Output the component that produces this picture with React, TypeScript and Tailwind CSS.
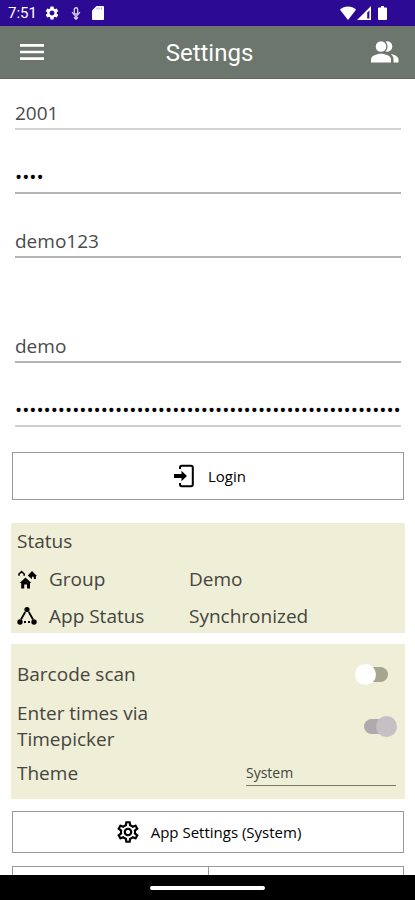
import { useState } from "react";
import { MdMenu, MdOutlineSettings, MdSettings } from "react-icons/md";

type Field = {
  id: string;
  label: string;
  type: "text" | "password";
  value: string;
  underline: string;
};

const TERMINAL_FIELDS: Field[] = [
  { id: "terminal", label: "Terminal", type: "text", value: "2001", underline: "border-b-2 border-[#d3d3d3]" },
  { id: "pin", label: "PIN", type: "password", value: "0000", underline: "border-b-2 border-[#b4b4b4]" },
  { id: "customer", label: "Customer", type: "text", value: "demo123", underline: "border-b-2 border-[#b4b4b4]" },
];

const ACCOUNT_FIELDS: Field[] = [
  { id: "user", label: "User", type: "text", value: "demo", underline: "border-b-2 border-[#b4b4b4]" },
  { id: "password", label: "Password", type: "password", value: "0".repeat(54), underline: "border-b-2 border-[#cfcfcf]" },
];

function MicIcon() {
  return (
    <svg viewBox="0 0 10 14" className="h-[13px] w-[10px]" fill="none" stroke="#d9d2f5" strokeWidth="1.4">
      <rect x="3.2" y="0.8" width="3.6" height="7" rx="1.8" />
      <path d="M.8 5.600 5 10.600 9.200 5.600M5 10.200v3.200M2.800 11 5 13.200 7.200 11" />
    </svg>
  );
}

function SdCardIcon() {
  return (
    <svg viewBox="0 0 12 14" className="h-[14px] w-3" fill="white">
      <path d="M4.500 0H11a1 1 0 0 1 1 1v12a1 1 0 0 1-1 1H1a1 1 0 0 1-1-1V4.500Z" />
      <path d="M5 1.500v2M7.200 1.500v2M9.400 1.500v2" stroke="#8f7fc8" strokeWidth="0.8" />
    </svg>
  );
}

function WifiIcon() {
  return (
    <svg viewBox="0 0 16 14" className="h-[14px] w-[16px]" fill="white">
      <path d="M8 14 0 3.8C2.2 1.4 5 .4 8 .4s5.800 1 8 3.400Z" />
    </svg>
  );
}

function SignalIcon() {
  return (
    <svg viewBox="0 0 14 14" className="h-[14px] w-[14px]" fill="white">
      <path fillRule="evenodd" d="M14 0v14H0ZM12.400 4.500 10.200 6.500v6h2.200Z" />
    </svg>
  );
}

function BatteryIcon() {
  return (
    <svg viewBox="0 0 9 14" className="h-[14px] w-[9px]" fill="white">
      <path d="M3 0h3v1.500h2a1 1 0 0 1 1 1V13a1 1 0 0 1-1 1H1a1 1 0 0 1-1-1V2.500a1 1 0 0 1 1-1h2Z" />
    </svg>
  );
}

function UsersIcon() {
  return (
    <svg viewBox="0 0 28 22" className="h-[22px] w-7" fill="white">
      <circle cx="10" cy="5.500" r="5.300" />
      <path d="M0 21.500V18.500C0 15 5.500 12.800 10 12.800s10 2.200 10 5.700v3Z" />
      <path d="M14.600 10.600a5.300 5.300 0 1 0 0-10.200 7.600 7.600 0 0 1 0 10.200Z" />
      <path d="M19.800 13.100c4.200.7 7.700 2.600 7.700 5.400v3h-5V18.500c0-2.200-1-4-2.700-5.400Z" />
    </svg>
  );
}

function LoginIcon() {
  return (
    <svg viewBox="0 0 20 24" className="h-6 w-5" fill="none" stroke="black" strokeWidth="2">
      <path d="M6 5V3.500A1.800 1.800 0 0 1 7.800 1.700H17A1.800 1.800 0 0 1 18.800 3.500v17A1.800 1.800 0 0 1 17 22.300H7.800A1.800 1.800 0 0 1 6 20.500V19" />
      <path d="M0 10h7.500V6.800L13 12l-5.500 5.200V14H0Z" fill="black" stroke="none" />
    </svg>
  );
}

function GroupIcon() {
  return (
    <svg viewBox="0 0 20 20" className="size-5 shrink-0" fill="black">
      <path d="M8.500 8.500 14.300 14H13V19.500H10V15.500H7.200V19.500H4.200V14H2.700Z" />
      <path d="M15 2 20 7H18.900V10H16.800V7.800H15V10.300L10.800 6.400Z" />
      <path d="M2 6.800V5L4.600 2.600 7.200 5V6.800" fill="none" stroke="black" strokeWidth="1.600" />
    </svg>
  );
}

function SyncStatusIcon() {
  return (
    <svg viewBox="0 0 20 20" className="size-5 shrink-0" fill="black">
      <circle cx="10" cy="3.500" r="2.600" />
      <circle cx="3" cy="16" r="2.700" />
      <circle cx="17" cy="16" r="2.700" />
      <path d="M8.200 6 4 13.500M11.800 6 16 13.500" fill="none" stroke="black" strokeWidth="1.800" />
      <path d="M7 16h6" fill="none" stroke="black" strokeWidth="1.800" strokeDasharray="2 2" />
    </svg>
  );
}

function TextField({ field }: { field: Field }) {
  return (
    <input
      id={field.id}
      aria-label={field.label}
      type={field.type}
      defaultValue={field.value}
      className={`h-8 w-full rounded-none bg-transparent p-0 text-[19px] outline-none ${
        field.type === "password" ? "text-black" : "text-[#4a4a4a]"
      } ${field.underline}`}
    />
  );
}

export default function App() {
  const [barcodeScan, setBarcodeScan] = useState(false);
  const [theme, setTheme] = useState("System");

  return (
    <div className="flex h-screen flex-col overflow-hidden bg-white font-['Open_Sans',sans-serif] text-[#45453f]">
      <div className="flex h-[26px] shrink-0 items-center justify-between bg-[#2c0a94] pr-7 pl-2 font-['Roboto',sans-serif] text-white">
        <div className="flex items-center">
          <span className="w-9 text-[15px]">7:51</span>
          <MdSettings className="size-4" />
          <span className="mx-[11px]">
            <MicIcon />
          </span>
          <SdCardIcon />
        </div>
        <div className="flex items-center gap-px">
          <WifiIcon />
          <SignalIcon />
          <span className="ml-[6px]">
            <BatteryIcon />
          </span>
        </div>
      </div>

      <header className="flex h-[53px] shrink-0 items-center justify-between border-b border-[#5f675f] bg-[#6c766c] px-4 text-white">
        <button type="button" aria-label="Menu">
          <MdMenu className="size-8" />
        </button>
        <h1 className="pt-[2px] font-['Roboto',sans-serif] text-2xl">Settings</h1>
        <button type="button" aria-label="Users">
          <UsersIcon />
        </button>
      </header>

      <main className="min-h-0 flex-1 overflow-hidden pt-[19px] pr-[10px] pl-[11px]">
        <form onSubmit={(event) => event.preventDefault()}>
          <div className="flex flex-col gap-8 px-1">
            {TERMINAL_FIELDS.map((field) => (
              <TextField key={field.id} field={field} />
            ))}
          </div>
          <div className="mt-[73px] flex flex-col gap-8 px-1">
            {ACCOUNT_FIELDS.map((field) => (
              <TextField key={field.id} field={field} />
            ))}
          </div>
          <div className="mt-[25px] px-px">
            <button
              type="submit"
              className="flex h-12 w-full items-center justify-center gap-[14px] border border-[#999] pl-1 text-[15px] text-black"
            >
              <LoginIcon />
              Login
            </button>
          </div>
        </form>

        <section className="mt-[23px] bg-[#efeed7] px-[6px] pt-[5px] pb-1 text-[19px] leading-[26px]">
          <h2>Status</h2>
          <dl className="mt-3 grid grid-cols-[172px_1fr] gap-y-[11px]">
            <dt className="flex items-center gap-3">
              <GroupIcon />
              Group
            </dt>
            <dd>Demo</dd>
            <dt className="flex items-center gap-3">
              <SyncStatusIcon />
              App Status
            </dt>
            <dd>Synchronized</dd>
          </dl>
        </section>

        <section className="mt-[11px] bg-[#efeed7] px-[6px] pt-[17px] pb-[13px] text-[19px] leading-[26px]">
          <div className="flex items-center justify-between">
            <label htmlFor="barcode-scan">Barcode scan</label>
            <input
              id="barcode-scan"
              type="checkbox"
              role="switch"
              checked={barcodeScan}
              onChange={(event) => setBarcodeScan(event.target.checked)}
              className="relative mr-[11px] h-[15px] w-7 appearance-none rounded-full bg-[#a6a690] before:absolute before:-top-[3px] before:-left-[5px] before:size-[21px] before:rounded-full before:bg-white checked:before:left-3"
            />
          </div>
          <div className="mt-[13px] flex items-center justify-between">
            <label htmlFor="timepicker" className="w-40">
              Enter times via Timepicker
            </label>
            <input
              id="timepicker"
              type="checkbox"
              role="switch"
              defaultChecked
              disabled
              className="relative mr-[7px] h-[15px] w-7 appearance-none rounded-full bg-[#adabab] before:absolute before:-top-[3px] before:left-3 before:size-[21px] before:rounded-full before:bg-[#c4c0c4]"
            />
          </div>
          <div className="mt-2 flex items-center justify-between">
            <label htmlFor="theme">Theme</label>
            <select
              id="theme"
              value={theme}
              onChange={(event) => setTheme(event.target.value)}
              className="mr-[3px] h-[26px] w-[150px] appearance-none rounded-none border-b border-[#77776b] bg-transparent text-sm outline-none"
            >
              <option>System</option>
              <option>Light</option>
              <option>Dark</option>
            </select>
          </div>
        </section>

        <div className="mt-3 px-px">
          <button
            type="button"
            className="flex h-[42px] w-full items-center justify-center gap-[10px] border border-[#999] text-[15px] text-black"
          >
            <MdOutlineSettings className="size-[26px]" />
            App Settings (System)
          </button>
          <div className="mt-[13px] flex">
            <button type="button" aria-label="Back" className="h-[42px] flex-1 border border-[#999]" />
            <button type="button" aria-label="Next" className="h-[42px] flex-1 border border-l-0 border-[#999]" />
          </div>
        </div>
      </main>

      <div className="flex h-[25px] shrink-0 items-center justify-center bg-black">
        <div className="h-1 w-[115px] rounded-full bg-white" />
      </div>
    </div>
  );
}
